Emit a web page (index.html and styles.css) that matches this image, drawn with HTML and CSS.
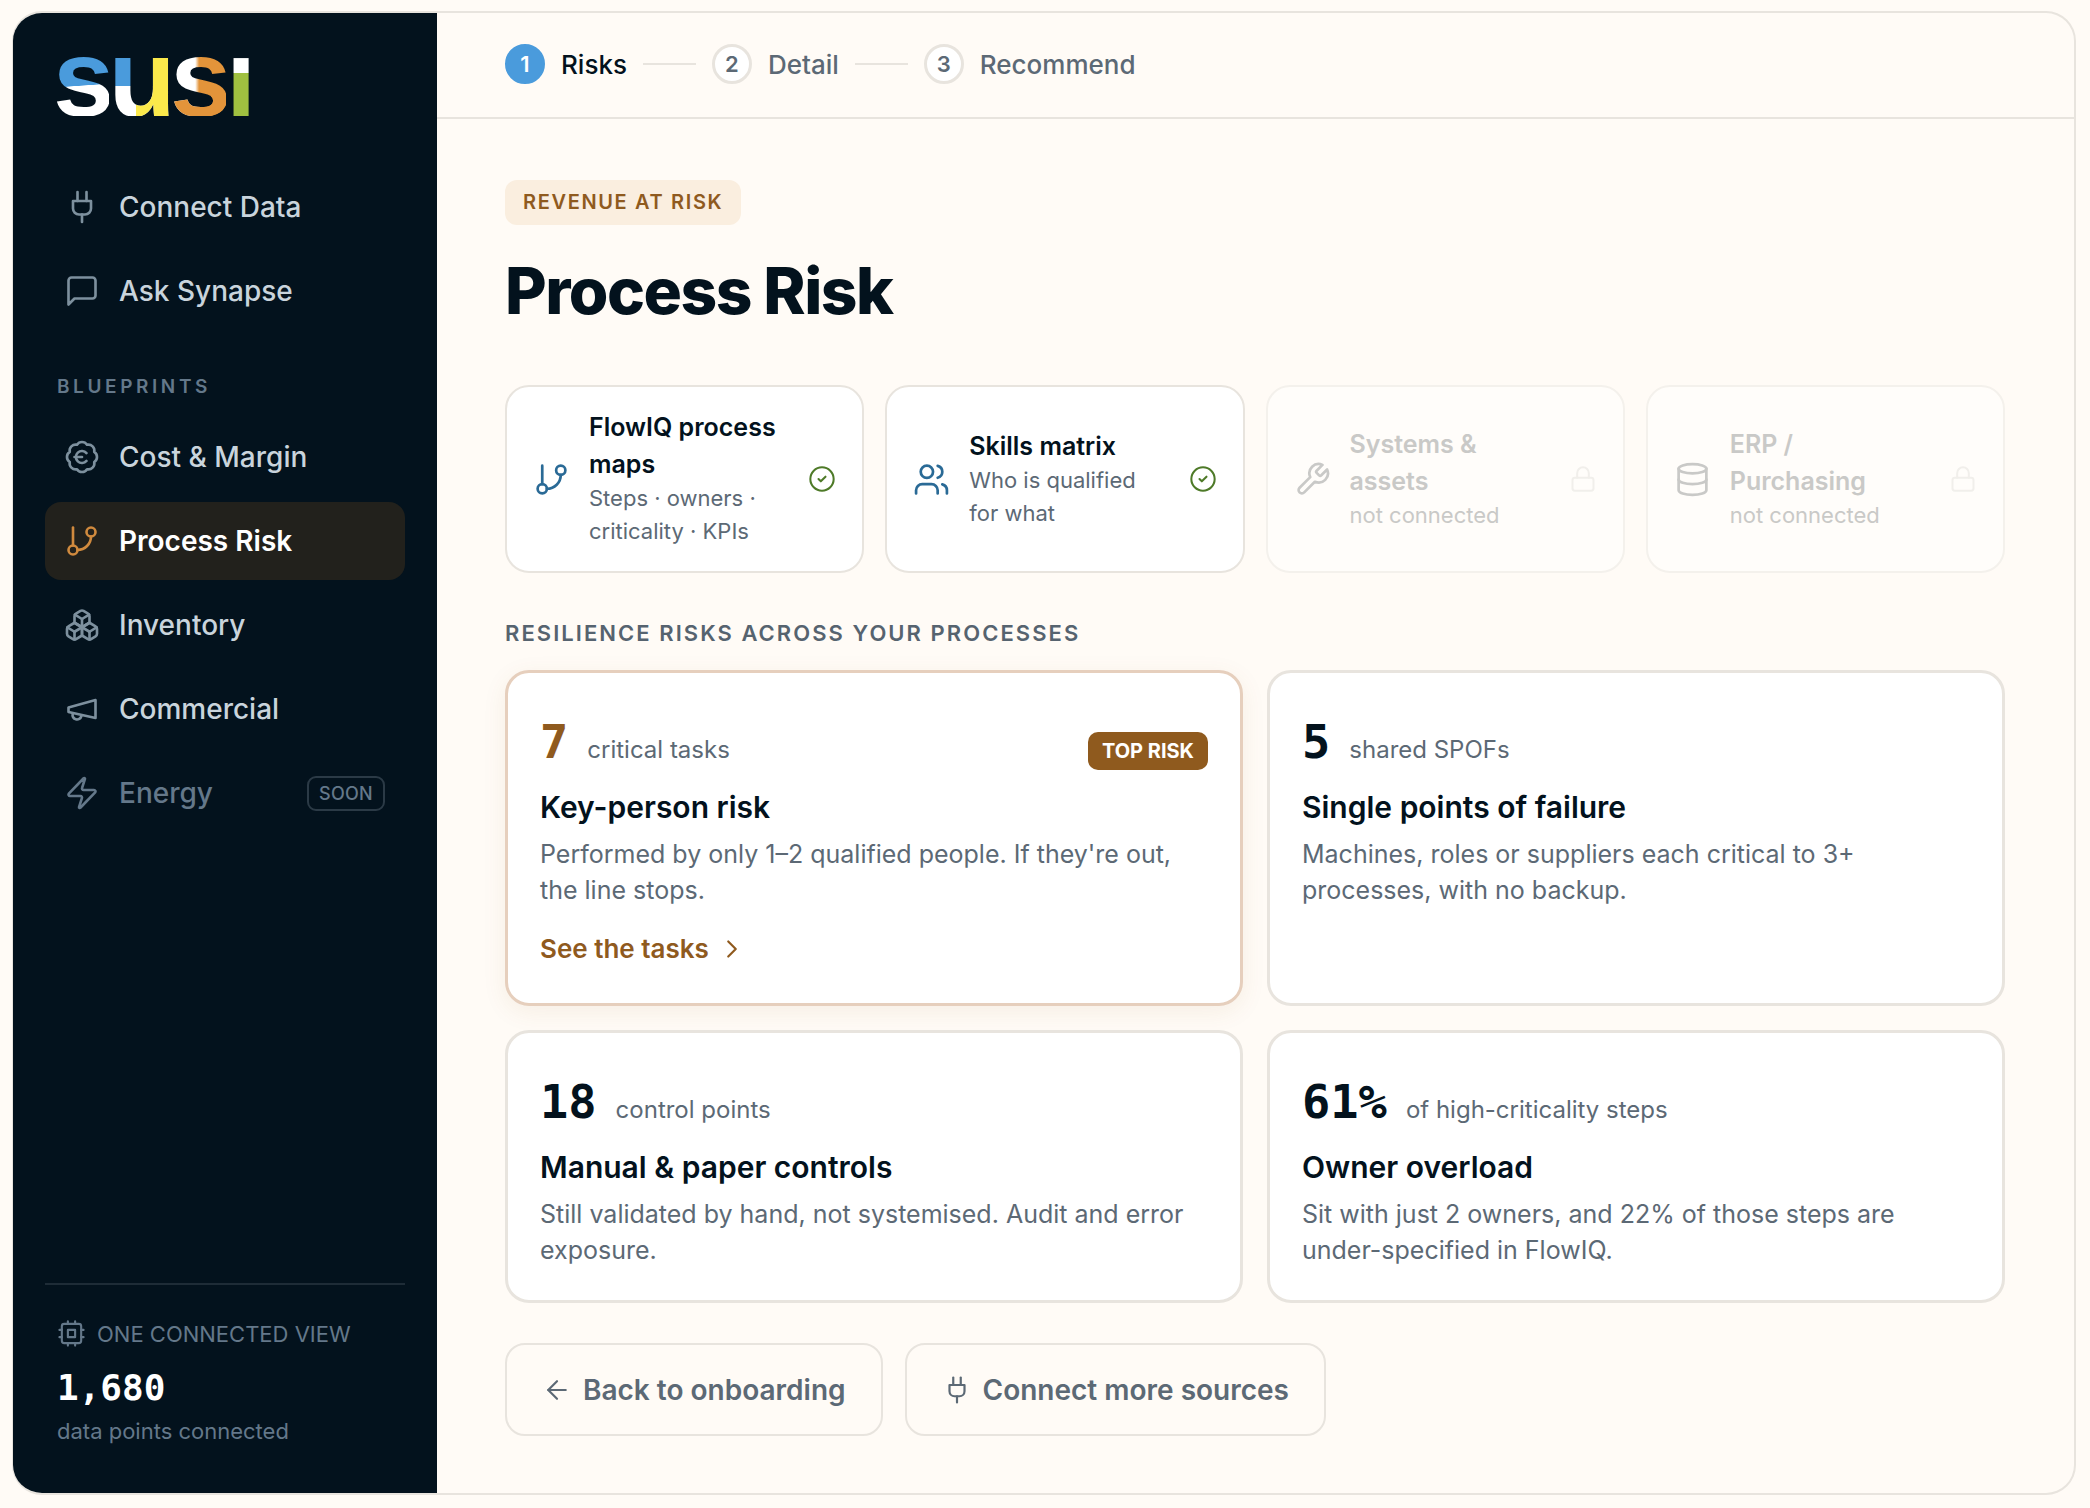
FILE: index.html
```html
<!DOCTYPE html>
<html lang="en">
<head>
  <meta charset="UTF-8">
  <meta name="viewport" content="width=device-width, initial-scale=1.0">
  <title>Process Risk - SUSI</title>
  <link rel="stylesheet" href="styles.css">
</head>
<body>
  <svg class="sprite" xmlns="http://www.w3.org/2000/svg">
    <symbol id="i-plug" viewBox="0 0 24 24"><path d="M12 22v-5"/><path d="M9 8V2"/><path d="M15 8V2"/><path d="M18 8v5a4 4 0 0 1-4 4h-4a4 4 0 0 1-4-4V8Z"/></symbol>
    <symbol id="i-chat" viewBox="0 0 24 24"><path d="M21 15a2 2 0 0 1-2 2H7l-4 4V5a2 2 0 0 1 2-2h14a2 2 0 0 1 2 2z"/></symbol>
    <symbol id="i-euro" viewBox="0 0 24 24"><path d="M3.85 8.62a4 4 0 0 1 4.78-4.77 4 4 0 0 1 6.74 0 4 4 0 0 1 4.78 4.78 4 4 0 0 1 0 6.74 4 4 0 0 1-4.77 4.78 4 4 0 0 1-6.75 0 4 4 0 0 1-4.78-4.77 4 4 0 0 1 0-6.76Z"/><path d="M7 12h5"/><path d="M15 9.4a4 4 0 1 0 0 5.2"/></symbol>
    <symbol id="i-branch" viewBox="0 0 24 24"><line x1="6" x2="6" y1="3" y2="15"/><circle cx="18" cy="6" r="3"/><circle cx="6" cy="18" r="3"/><path d="M18 9a9 9 0 0 1-9 9"/></symbol>
    <symbol id="i-boxes" viewBox="0 0 24 24"><path d="M2.97 12.92A2 2 0 0 0 2 14.63v3.24a2 2 0 0 0 .97 1.71l3 1.8a2 2 0 0 0 2.06 0L12 19v-5.5l-5-3-4.03 2.42Z"/><path d="m7 16.5-4.74-2.85"/><path d="m7 16.5 5-3"/><path d="M7 16.5v5.17"/><path d="M12 13.5V19l3.97 2.38a2 2 0 0 0 2.06 0l3-1.8a2 2 0 0 0 .97-1.71v-3.24a2 2 0 0 0-.97-1.71L17 10.5l-5 3Z"/><path d="m17 16.5-5-3"/><path d="m17 16.5 4.74-2.85"/><path d="M17 16.5v5.17"/><path d="M7.97 4.42A2 2 0 0 0 7 6.13v4.37l5 3 5-3V6.13a2 2 0 0 0-.97-1.71l-3-1.8a2 2 0 0 0-2.06 0l-3 1.8Z"/><path d="M12 8 7.26 5.15"/><path d="m12 8 4.74-2.85"/><path d="M12 13.5V8"/></symbol>
    <symbol id="i-megaphone" viewBox="0 0 24 24"><path d="m3 11 18-5v12L3 14v-3z"/><path d="M11.6 16.8a3 3 0 1 1-5.8-1.6"/></symbol>
    <symbol id="i-zap" viewBox="0 0 24 24"><path d="M4 14a1 1 0 0 1-.78-1.63l9.9-10.2a.5.5 0 0 1 .86.46l-1.92 6.02A1 1 0 0 0 13 10h7a1 1 0 0 1 .78 1.63l-9.9 10.2a.5.5 0 0 1-.86-.46l1.92-6.02A1 1 0 0 0 11 14z"/></symbol>
    <symbol id="i-cpu" viewBox="0 0 24 24"><rect x="4" y="4" width="16" height="16" rx="2"/><rect x="9" y="9" width="6" height="6"/><path d="M15 2v2"/><path d="M15 20v2"/><path d="M2 15h2"/><path d="M2 9h2"/><path d="M20 15h2"/><path d="M20 9h2"/><path d="M9 2v2"/><path d="M9 20v2"/></symbol>
    <symbol id="i-check" viewBox="0 0 24 24"><circle cx="12" cy="12" r="10"/><path d="m9 12 2 2 4-4"/></symbol>
    <symbol id="i-users" viewBox="0 0 24 24"><path d="M16 21v-2a4 4 0 0 0-4-4H6a4 4 0 0 0-4 4v2"/><circle cx="9" cy="7" r="4"/><path d="M22 21v-2a4 4 0 0 0-3-3.87"/><path d="M16 3.13a4 4 0 0 1 0 7.75"/></symbol>
    <symbol id="i-wrench" viewBox="0 0 24 24"><path d="M14.7 6.3a1 1 0 0 0 0 1.4l1.6 1.6a1 1 0 0 0 1.4 0l3.77-3.77a6 6 0 0 1-7.94 7.94l-6.91 6.91a2.12 2.12 0 0 1-3-3l6.91-6.91a6 6 0 0 1 7.94-7.94l-3.76 3.76z"/></symbol>
    <symbol id="i-database" viewBox="0 0 24 24"><ellipse cx="12" cy="5" rx="9" ry="3"/><path d="M3 5V19A9 3 0 0 0 21 19V5"/><path d="M3 12A9 3 0 0 0 21 12"/></symbol>
    <symbol id="i-lock" viewBox="0 0 24 24"><rect x="3" y="11" width="18" height="11" rx="2"/><path d="M7 11V7a5 5 0 0 1 10 0v4"/></symbol>
    <symbol id="i-left" viewBox="0 0 24 24"><path d="m12 19-7-7 7-7"/><path d="M19 12H5"/></symbol>
    <symbol id="i-right" viewBox="0 0 24 24"><path d="m9 18 6-6-6-6"/></symbol>
  </svg>

  <div class="app">
    <aside class="sidebar">
      <div class="logo"><span class="logo-s1">s</span><span class="logo-u">u</span><span class="logo-s2">s</span><span class="logo-i">ı</span></div>

      <nav class="nav">
        <a class="nav-item"><svg class="icon"><use href="#i-plug"/></svg>Connect Data</a>
        <a class="nav-item"><svg class="icon"><use href="#i-chat"/></svg>Ask Synapse</a>
        <div class="nav-label">BLUEPRINTS</div>
        <a class="nav-item"><svg class="icon"><use href="#i-euro"/></svg>Cost &amp; Margin</a>
        <a class="nav-item active"><svg class="icon"><use href="#i-branch"/></svg>Process Risk</a>
        <a class="nav-item"><svg class="icon"><use href="#i-boxes"/></svg>Inventory</a>
        <a class="nav-item"><svg class="icon"><use href="#i-megaphone"/></svg>Commercial</a>
        <a class="nav-item muted"><svg class="icon"><use href="#i-zap"/></svg>Energy<span class="soon">SOON</span></a>
      </nav>

      <div class="side-footer">
        <div class="side-footer-title"><svg class="icon"><use href="#i-cpu"/></svg>ONE CONNECTED VIEW</div>
        <div class="side-footer-num">1,680</div>
        <div class="side-footer-sub">data points connected</div>
      </div>
    </aside>

    <main class="main">
      <header class="stepper">
        <span class="step-dot current">1</span><span class="step-name current">Risks</span>
        <span class="step-line"></span>
        <span class="step-dot">2</span><span class="step-name">Detail</span>
        <span class="step-line"></span>
        <span class="step-dot">3</span><span class="step-name">Recommend</span>
      </header>

      <div class="content">
        <div class="pill">REVENUE AT RISK</div>
        <h1>Process Risk</h1>

        <div class="sources">
          <div class="source">
            <svg class="icon source-icon"><use href="#i-branch"/></svg>
            <div class="source-text">
              <div class="source-title">FlowIQ process maps</div>
              <div class="source-sub">Steps · owners · criticality · KPIs</div>
            </div>
            <svg class="icon source-state"><use href="#i-check"/></svg>
          </div>
          <div class="source">
            <svg class="icon source-icon"><use href="#i-users"/></svg>
            <div class="source-text">
              <div class="source-title">Skills matrix</div>
              <div class="source-sub">Who is qualified for what</div>
            </div>
            <svg class="icon source-state"><use href="#i-check"/></svg>
          </div>
          <div class="source off">
            <svg class="icon source-icon"><use href="#i-wrench"/></svg>
            <div class="source-text">
              <div class="source-title">Systems &amp; assets</div>
              <div class="source-sub">not connected</div>
            </div>
            <svg class="icon source-state"><use href="#i-lock"/></svg>
          </div>
          <div class="source off">
            <svg class="icon source-icon"><use href="#i-database"/></svg>
            <div class="source-text">
              <div class="source-title">ERP / Purchasing</div>
              <div class="source-sub">not connected</div>
            </div>
            <svg class="icon source-state"><use href="#i-lock"/></svg>
          </div>
        </div>

        <div class="section-label">RESILIENCE RISKS ACROSS YOUR PROCESSES</div>

        <div class="risks">
          <div class="risk top">
            <div class="risk-head">
              <span class="risk-num">7</span><span class="risk-unit">critical tasks</span>
              <span class="badge">TOP RISK</span>
            </div>
            <div class="risk-title">Key-person risk</div>
            <p class="risk-desc">Performed by only 1–2 qualified people. If they're out, the line stops.</p>
            <a class="risk-link">See the tasks<svg class="icon"><use href="#i-right"/></svg></a>
          </div>
          <div class="risk">
            <div class="risk-head">
              <span class="risk-num">5</span><span class="risk-unit">shared SPOFs</span>
            </div>
            <div class="risk-title">Single points of failure</div>
            <p class="risk-desc">Machines, roles or suppliers each critical to 3+ processes, with no backup.</p>
          </div>
          <div class="risk">
            <div class="risk-head">
              <span class="risk-num">18</span><span class="risk-unit">control points</span>
            </div>
            <div class="risk-title">Manual &amp; paper controls</div>
            <p class="risk-desc">Still validated by hand, not systemised. Audit and error exposure.</p>
          </div>
          <div class="risk">
            <div class="risk-head">
              <span class="risk-num">61%</span><span class="risk-unit">of high-criticality steps</span>
            </div>
            <div class="risk-title">Owner overload</div>
            <p class="risk-desc">Sit with just 2 owners, and 22% of those steps are under-specified in FlowIQ.</p>
          </div>
        </div>

        <div class="actions">
          <a class="btn"><svg class="icon"><use href="#i-left"/></svg>Back to onboarding</a>
          <a class="btn"><svg class="icon"><use href="#i-plug"/></svg>Connect more sources</a>
        </div>
      </div>
    </main>
  </div>
</body>
</html>
```

FILE: styles.css
```css
:root {
  --ink: #03121d;
  --paper: #fffbf6;
  --line: #e8e4de;
  --grey: #5c6975;
  --brown: #8f5a1e;
  --mono: "DejaVu Sans Mono", monospace;
}

* {
  box-sizing: border-box;
}

html, body {
  height: 100%;
}

body {
  margin: 0;
  padding: 11px 14px 13px 12px;
  font-family: Inter, "Noto Sans", sans-serif;
  color: var(--ink);
  background: var(--paper);
  overflow: hidden;
}

.sprite {
  display: none;
}

.icon {
  flex: none;
  fill: none;
  stroke: currentColor;
  stroke-width: 1.75;
  stroke-linecap: round;
  stroke-linejoin: round;
}

.app {
  display: flex;
  height: 100%;
  border: 2px solid var(--line);
  border-left-width: 1px;
  border-radius: 30px;
  overflow: hidden;
}

/* Sidebar */
.sidebar {
  width: 424px;
  flex: none;
  display: flex;
  flex-direction: column;
  padding: 0 32px 0 32px;
  background: var(--ink);
}

.logo {
  height: 60px;
  margin: 43px 0 0 8px;
  font-family: "Liberation Sans", sans-serif;
  font-size: 110px;
  font-weight: 700;
  line-height: 60px;
  letter-spacing: -5.6px;
  display: flex;
  align-items: center;
}

.logo span {
  display: block;
  height: 60px;
  line-height: 44px;
  -webkit-background-clip: text;
  background-clip: text;
  color: transparent;
}

.logo-s1 {
  background-image: linear-gradient(176deg, #4a9bdc 49%, #fff 50%);
}

.logo-u {
  background-image:
    linear-gradient(90deg, transparent 44%, #fbe94b 44%),
    linear-gradient(180deg, #4a9bdc 50%, #fff 50%);
}

.logo-s2 {
  background-image:
    linear-gradient(180deg, transparent 66%, #e3943a 66%),
    linear-gradient(90deg, #fff 45%, #e3943a 52%);
}

.logo-i {
  background-image: linear-gradient(180deg, #fff 29%, #a0c040 29%);
}

.nav {
  display: flex;
  flex-direction: column;
  gap: 6px;
  margin-top: 52px;
}

.nav-item {
  display: flex;
  align-items: center;
  gap: 19px;
  height: 78px;
  padding: 0 20px 0 19px;
  border-radius: 16px;
  font-size: 28px;
  font-weight: 500;
  color: #c9d4dc;
}

.nav-item .icon {
  width: 36px;
  height: 36px;
  color: #7d909e;
}

.nav-item.active {
  background: #22211c;
  color: #fff;
  font-weight: 600;
}

.nav-item.active .icon {
  color: #d08a3e;
}

.nav-item.muted {
  color: #64788a;
}

.nav-item.muted .icon {
  color: #64788a;
}

.soon {
  margin-left: auto;
  padding: 5px 10px;
  border: 2px solid #2b3a46;
  border-radius: 9px;
  font-size: 18px;
  font-weight: 500;
  letter-spacing: 0.3px;
  color: #64788a;
}

.nav-label {
  margin: 30px 0 0 12px;
  height: 46px;
  font-size: 19px;
  font-weight: 600;
  letter-spacing: 3.6px;
  line-height: 42px;
  color: #64788a;
}

.side-footer {
  margin-top: auto;
  padding: 34px 12px 49px;
  border-top: 2px solid #1e2c37;
}

.side-footer-title {
  display: flex;
  align-items: center;
  gap: 11px;
  font-size: 22px;
  color: #64788a;
}

.side-footer-title .icon {
  width: 29px;
  height: 29px;
}

.side-footer-num {
  margin-top: 18px;
  font-family: var(--mono);
  font-size: 36px;
  font-weight: 700;
  line-height: 44px;
  color: #fff;
}

.side-footer-sub {
  margin-top: 8px;
  font-size: 22px;
  color: #64788a;
}

/* Main */
.main {
  flex: 1;
  min-width: 0;
  display: flex;
  flex-direction: column;
}

.stepper {
  display: flex;
  align-items: center;
  height: 106px;
  padding: 0 68px 2px;
  border-bottom: 2px solid var(--line);
}

.step-dot {
  width: 40px;
  height: 40px;
  display: flex;
  align-items: center;
  justify-content: center;
  border: 3px solid var(--line);
  border-radius: 50%;
  background: #fff;
  font-size: 22px;
  font-weight: 600;
  color: var(--grey);
}

.step-dot.current {
  border-color: #4a9bdc;
  background: #4a9bdc;
  color: #fff;
}

.step-name {
  margin-left: 16px;
  font-size: 26px;
  font-weight: 500;
  color: var(--grey);
}

.step-name.current {
  color: var(--ink);
}

.step-line {
  width: 53px;
  height: 2px;
  margin: 0 16px;
  background: var(--line);
}

.content {
  padding: 61px 69px 0 68px;
}

.pill {
  display: inline-block;
  height: 45px;
  padding: 0 18px;
  border-radius: 12px;
  background: #faeedf;
  font-size: 20px;
  font-weight: 600;
  letter-spacing: 1.65px;
  line-height: 45px;
  color: var(--brown);
}

h1 {
  margin: 26px 0 54px;
  font-size: 64px;
  font-weight: 800;
  line-height: 80px;
  letter-spacing: -1.5px;
}

.sources {
  display: grid;
  grid-template-columns: repeat(4, 1fr);
  gap: 21px;
}

.source {
  display: flex;
  align-items: center;
  height: 188px;
  padding: 0 26px;
  border: 2px solid var(--line);
  border-radius: 24px;
  background: #fff;
}

.source-icon {
  width: 37px;
  height: 37px;
  color: #2a6a96;
}

.source-text {
  flex: 1;
  margin: 0 24px 1px 19px;
}

.source-title {
  font-size: 25px;
  font-weight: 600;
  line-height: 37px;
}

.source-sub {
  margin-top: -1px;
  font-size: 22px;
  line-height: 33px;
  color: var(--grey);
}

.source-state {
  width: 28px;
  height: 28px;
  color: #4e7a28;
}

.source.off {
  border-color: #f4f1ec;
  background: #fffdfa;
}

.source.off .source-icon,
.source.off .source-title,
.source.off .source-sub {
  color: #c9c9c7;
}

.source.off .source-state {
  color: #f1efeb;
}

.section-label {
  margin: 46px 0 23px;
  font-size: 22px;
  font-weight: 600;
  letter-spacing: 2.05px;
  line-height: 28px;
  color: #56636f;
}

.risks {
  display: grid;
  grid-template-columns: 1fr 1fr;
  gap: 24px;
}

.risk {
  padding: 34px 32px 32px 32px;
  border: 3px solid var(--line);
  border-radius: 24px;
  background: #fff;
}

.risk.top {
  border-color: #e6cfbd;
  box-shadow: 0 6px 24px rgba(143, 90, 30, 0.08);
}

.risk-head {
  display: flex;
  align-items: baseline;
  height: 70px;
}

.risk-num {
  font-family: var(--mono);
  font-size: 47px;
  font-weight: 700;
  line-height: 70px;
}

.risk.top .risk-num {
  color: var(--brown);
}

.risk-unit {
  margin-left: 19px;
  font-size: 24px;
  color: var(--grey);
}

.badge {
  margin-left: auto;
  padding: 0 14px;
  border-radius: 10px;
  background: var(--brown);
  font-size: 20px;
  font-weight: 700;
  line-height: 38px;
  color: #fff;
}

.risk-title {
  margin-top: 10px;
  font-size: 30px;
  font-weight: 600;
  line-height: 40px;
}

.risk-desc {
  margin: 9px 0 0;
  font-size: 25px;
  line-height: 36px;
  color: var(--grey);
}

.risk-link {
  display: flex;
  align-items: center;
  gap: 8px;
  margin: 24px 0 5px;
  font-size: 26px;
  font-weight: 600;
  line-height: 34px;
  color: var(--brown);
}

.risk-link .icon {
  width: 30px;
  height: 30px;
}

.actions {
  display: flex;
  gap: 22px;
  margin-top: 40px;
}

.btn {
  display: flex;
  align-items: center;
  gap: 11px;
  height: 93px;
  padding: 0 35px;
  border: 2px solid var(--line);
  border-radius: 20px;
  font-size: 28px;
  font-weight: 600;
  color: var(--grey);
}

.btn .icon {
  width: 30px;
  height: 30px;
}
```
